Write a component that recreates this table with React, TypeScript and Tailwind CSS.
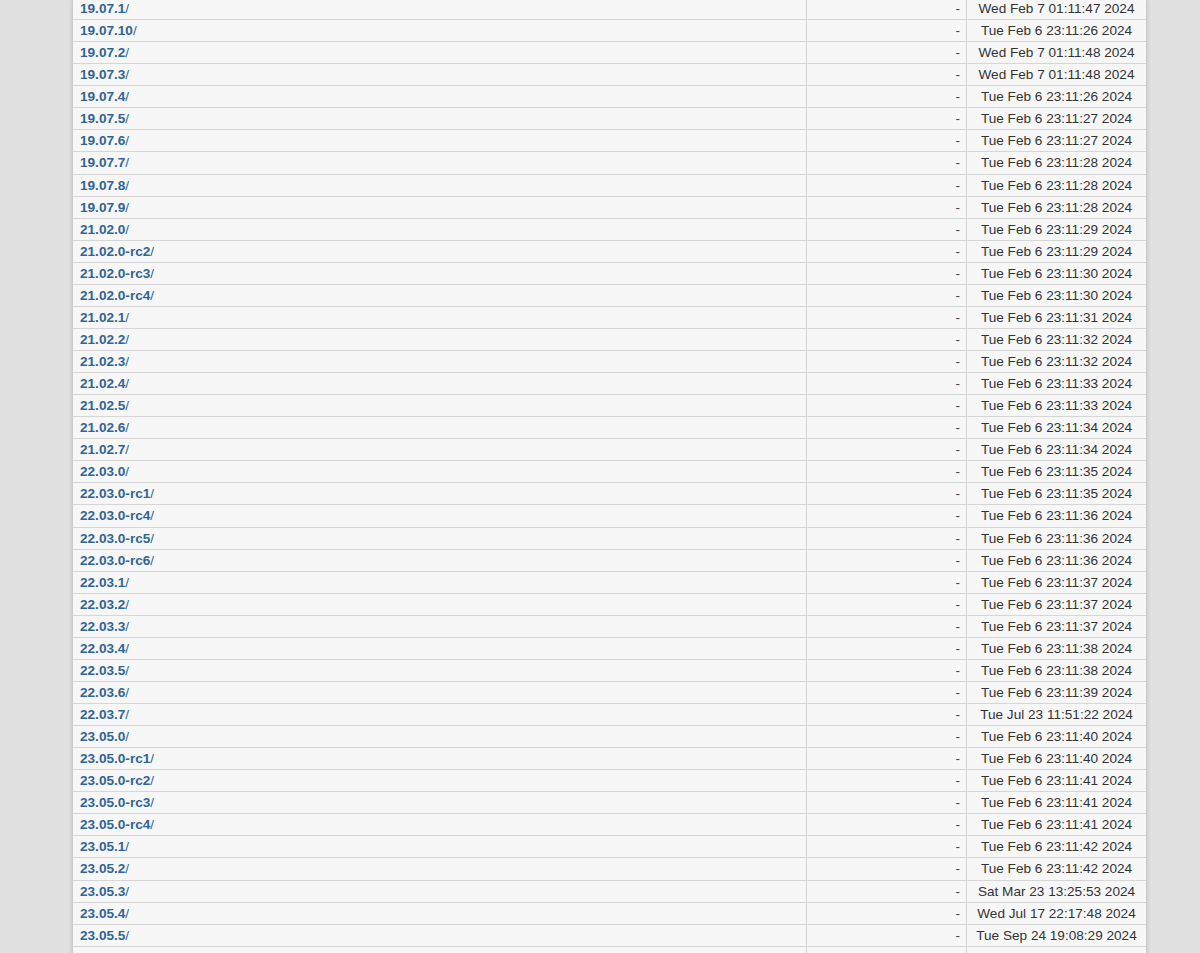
const rows: [string, string][] = [
  ['19.07.1', 'Wed Feb 7 01:11:47 2024'],
  ['19.07.10', 'Tue Feb 6 23:11:26 2024'],
  ['19.07.2', 'Wed Feb 7 01:11:48 2024'],
  ['19.07.3', 'Wed Feb 7 01:11:48 2024'],
  ['19.07.4', 'Tue Feb 6 23:11:26 2024'],
  ['19.07.5', 'Tue Feb 6 23:11:27 2024'],
  ['19.07.6', 'Tue Feb 6 23:11:27 2024'],
  ['19.07.7', 'Tue Feb 6 23:11:28 2024'],
  ['19.07.8', 'Tue Feb 6 23:11:28 2024'],
  ['19.07.9', 'Tue Feb 6 23:11:28 2024'],
  ['21.02.0', 'Tue Feb 6 23:11:29 2024'],
  ['21.02.0-rc2', 'Tue Feb 6 23:11:29 2024'],
  ['21.02.0-rc3', 'Tue Feb 6 23:11:30 2024'],
  ['21.02.0-rc4', 'Tue Feb 6 23:11:30 2024'],
  ['21.02.1', 'Tue Feb 6 23:11:31 2024'],
  ['21.02.2', 'Tue Feb 6 23:11:32 2024'],
  ['21.02.3', 'Tue Feb 6 23:11:32 2024'],
  ['21.02.4', 'Tue Feb 6 23:11:33 2024'],
  ['21.02.5', 'Tue Feb 6 23:11:33 2024'],
  ['21.02.6', 'Tue Feb 6 23:11:34 2024'],
  ['21.02.7', 'Tue Feb 6 23:11:34 2024'],
  ['22.03.0', 'Tue Feb 6 23:11:35 2024'],
  ['22.03.0-rc1', 'Tue Feb 6 23:11:35 2024'],
  ['22.03.0-rc4', 'Tue Feb 6 23:11:36 2024'],
  ['22.03.0-rc5', 'Tue Feb 6 23:11:36 2024'],
  ['22.03.0-rc6', 'Tue Feb 6 23:11:36 2024'],
  ['22.03.1', 'Tue Feb 6 23:11:37 2024'],
  ['22.03.2', 'Tue Feb 6 23:11:37 2024'],
  ['22.03.3', 'Tue Feb 6 23:11:37 2024'],
  ['22.03.4', 'Tue Feb 6 23:11:38 2024'],
  ['22.03.5', 'Tue Feb 6 23:11:38 2024'],
  ['22.03.6', 'Tue Feb 6 23:11:39 2024'],
  ['22.03.7', 'Tue Jul 23 11:51:22 2024'],
  ['23.05.0', 'Tue Feb 6 23:11:40 2024'],
  ['23.05.0-rc1', 'Tue Feb 6 23:11:40 2024'],
  ['23.05.0-rc2', 'Tue Feb 6 23:11:41 2024'],
  ['23.05.0-rc3', 'Tue Feb 6 23:11:41 2024'],
  ['23.05.0-rc4', 'Tue Feb 6 23:11:41 2024'],
  ['23.05.1', 'Tue Feb 6 23:11:42 2024'],
  ['23.05.2', 'Tue Feb 6 23:11:42 2024'],
  ['23.05.3', 'Sat Mar 23 13:25:53 2024'],
  ['23.05.4', 'Wed Jul 17 22:17:48 2024'],
  ['23.05.5', 'Tue Sep 24 19:08:29 2024'],
  ['', ''],
];

export default function App() {
  return (
    <div className="h-[953px] w-full overflow-hidden bg-[#e1e1e1] font-['Liberation_Sans',Arial,sans-serif] text-[13.6px]">
      <div className="-mt-[2px] ml-[73px] w-[1073px] bg-[#f7f7f7] shadow-[0_0_5px_rgba(0,0,0,0.22)]">
        {rows.map(([name, date], i) => (
          <div
            key={i}
            className="grid h-[22.07px] grid-cols-[733px_160px_180px] border-b border-[#d6d6d6] leading-[20px]"
          >
            <div className="pl-[7px] pt-px text-[#2f6596]">
              {name && (
                <a href="#" className="no-underline">
                  <span className="font-bold">{name}</span>/
                </a>
              )}
            </div>
            <div className="border-l border-[#d3d3d3] pr-[6px] pt-px text-right text-[#444]">
              {name && '-'}
            </div>
            <div className="border-l border-[#d3d3d3] pt-px text-center text-[#333]">{date}</div>
          </div>
        ))}
      </div>
    </div>
  );
}
